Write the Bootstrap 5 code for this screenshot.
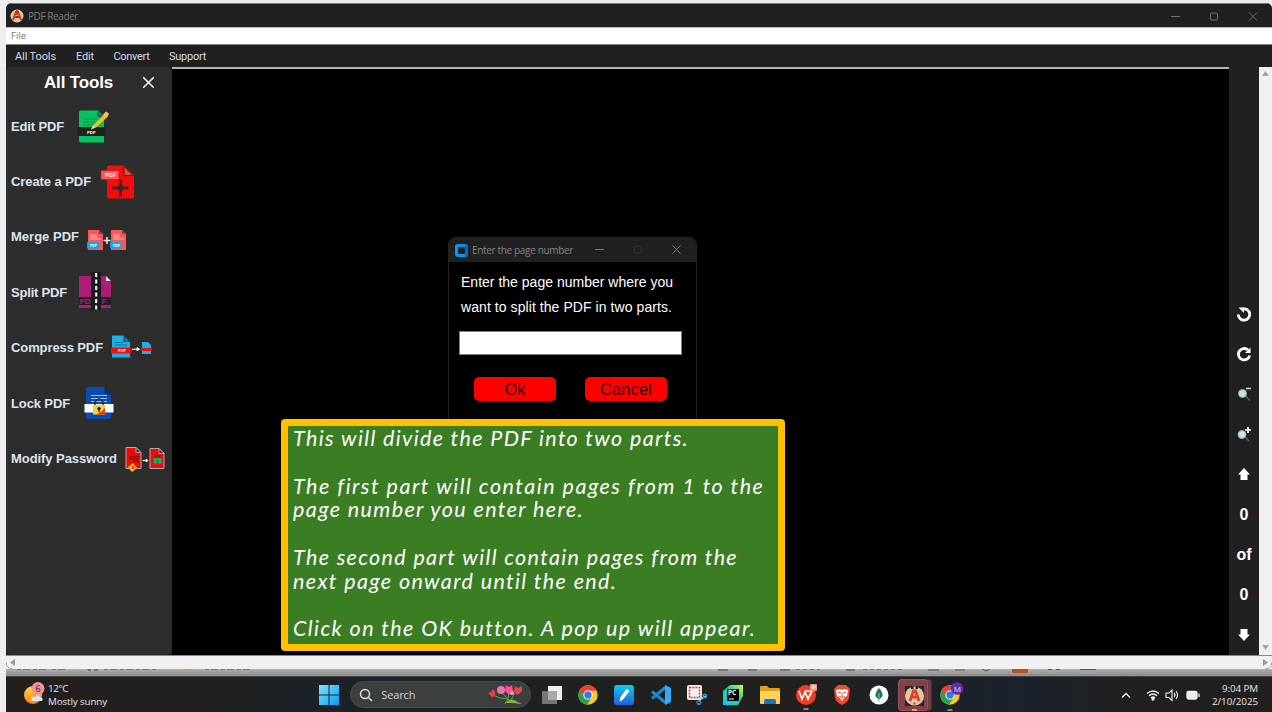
<!DOCTYPE html>
<html lang="en">
<head>
<meta charset="utf-8">
<title>PDF Reader</title>
<link href="https://cdn.jsdelivr.net/npm/bootstrap@5.3.0/dist/css/bootstrap.min.css" rel="stylesheet">
<style>
html,body{height:712px;overflow:hidden}
body{background:#eee;font-family:"Liberation Sans",Arial,sans-serif;line-height:1}
svg{display:block;flex:none}
.desk{width:1272px;height:712px;padding:3px 0 0 6px}
.win{height:666px;border-radius:6px 6px 7px 7px;background:#202020}
.ui{font-family:"Open Sans","Noto Sans",sans-serif}
.titlebar{height:24px;background:#202020;border-top:1px solid #777;color:#7c7c7c;font-size:10px}
.apptitle{margin-left:4px}
.filemenu{height:18px;background:#fff;border-top:1px solid #bbb;border-bottom:1px solid #888;color:#777;font-size:9.5px;padding-left:5px}
.toolmenu{height:22px;background:#202020;color:#d3dbe2;font:11px Roboto,sans-serif;padding-left:9px}
.m1{width:61px}.m2{width:37.5px}.m3{width:55.5px}
.workarea{height:588px}
.sidebar{width:166px;background:#2d2d2d;border-radius:5px}
.sidehead{height:31.5px;color:#fff;font-size:17px;padding-left:38px}
.headword{width:98px}
.tool{height:55.4px;padding-left:5px;color:#dce4ee;font-size:13px;font-weight:700}
.t1{width:57px}.t2{width:84px}.t3{width:74px}.t4{width:61px}.t5{width:97px}.t6{width:64px}.t7{width:109px}
.paper{background:#000;border-top:2px solid #b5b5b5}
.rail{width:30px;background:#202020;color:#fff;font-weight:700;font-size:16px}
.cell{height:40.15px}
.vscroll{width:13px;background:#f0f0f0}
.hscroll{height:14px;background:#f0f0f0;border-top:1px solid #888;border-radius:0 0 7px 7px}
.under{height:7px;background:linear-gradient(#b0b0b0,#8c8c8c)}
.taskbar{height:36px;background:linear-gradient(90deg,#22201f 0,#22201f 15%,#1a2228 25%,#202020 48%,#22201f 62%,#1b222c 80%,#22201f 90%);border-top:1px solid #444;color:#e6e6e6;font-size:9.8px;line-height:13px}
.weather{width:263px}
.pill{width:181px;height:27px;border-radius:14px;background:#3c3f40;border:1px solid #4a4c4d;color:#d0d0d0;font-size:11px;margin:0 2px 0 3px}
.app{width:36.35px}
.clock{width:48px;margin:0 14px 0 8px}
.dialog{left:448px;top:237px;width:249px;height:190px;border:1px solid #222;border-radius:7px 7px 0 0;background:#000;color:#fff}
.dialogbar{height:24px;background:#202020;border-radius:6px 6px 0 0;font-size:10px;color:#858585;padding-left:6px}
.dialogicon{margin-right:4px}
.prompt{font-size:14px;line-height:24.5px;padding:8px 0 0 12px}
.entry{width:223px;height:24px;background:#fff;border:1px solid #7a8084;margin:12px 0 0 10px}
.answers{padding:22px 0 0 25px;gap:29px}
.red{width:82px;height:24px;border-radius:5px;background:#f00;color:#300;font-size:16.5px}
.note{left:281px;top:419px;width:504px;height:232px;background:#3b7d23;border:7px solid #ffc000;border-radius:4px;color:#fff;font:italic 21.5px/23.75px Lato,sans-serif;padding:1px 0 0 5px}
[data-w]{white-space:nowrap}
.note span{display:table}
</style>
<script src="https://cdn.jsdelivr.net/npm/bootstrap@5.3.0/dist/js/bootstrap.bundle.min.js"></script>
</head>
<body>
<div class="desk d-flex flex-column position-relative">
 <main class="win d-flex flex-column overflow-hidden flex-shrink-0">
  <header class="titlebar ui d-flex align-items-center flex-shrink-0">
   <svg class="ms-1" width="14" height="14" viewBox="1 1 14 14"><circle cx="8" cy="8" r="6.500" fill="#dfc79d"/><path d="M4 12 7 4h2l3 8M5.500 9h5M6 6h4" fill="none" stroke="#d33a22" stroke-width="2"/><path d="M7 3h2M7 9h2" stroke="#222"/></svg>
   <span class="apptitle me-auto"><span data-w="50">PDF Reader</span></span>
   <svg width="104" height="22" viewBox="1168 4 104 22" fill="none" stroke="#707070"><path d="M1171 15.500h9M1249 11.500l8 8M1257 11.500l-8 8"/><rect x="1210.500" y="12" width="7" height="7" rx="1"/></svg>
  </header>
  <div class="filemenu ui d-flex align-items-center flex-shrink-0"><span data-w="15">File</span></div>
  <nav class="toolmenu d-flex align-items-center flex-shrink-0">
   <span class="m1"><span data-w="41">All Tools</span></span><span class="m2"><span data-w="18">Edit</span></span><span class="m3"><span data-w="36">Convert</span></span><span data-w="37">Support</span>
  </nav>
  <section class="workarea d-flex flex-shrink-0">
   <aside class="sidebar">
    <div class="sidehead d-flex align-items-center fw-bold"><span class="headword"><span data-w="69">All Tools</span></span><svg width="13" height="13" viewBox="0 0 13 13"><path d="M1.200 1.200l10.600 10.600M11.800 1.200 1.200 11.800" stroke="#fff" stroke-width="1.500"/></svg></div>
    <div class="tool d-flex align-items-center"><span class="t1"><span data-w="53">Edit PDF</span></span>
     <svg width="50" height="55" viewBox="68 98.500 50 55"><path d="M81 110h17l6 6v26H81q-2 0-2-2v-28q0-2 2-2z" fill="#04c35f"/><path d="M97 110v5q0 2 2 2h5z" fill="#087a40"/><path d="M83 118.500h14M83 121.500h12M83 124.500h10" stroke="#059348"/><rect x="77" y="126.500" width="28" height="9" fill="#202020"/><text x="87" y="133" font-size="4.300" fill="#fff">PDF</text><path d="M91 129l2-4 12-12 3 3-12 11z" fill="#eebd35"/><path d="M103 114l3-3q3 1 3 3l-3 3z" fill="#f1bd5b"/><path d="M91 129l2-4 2 2z" fill="#f7d8a2"/></svg></div>
    <div class="tool d-flex align-items-center"><span class="t2"><span data-w="80">Create a PDF</span></span>
     <svg width="50" height="55" viewBox="95 153.500 50 55"><path d="M109 165h15l10 10v21q0 2-2 2h-23q-2 0-2-2v-29q0-2 2-2z" fill="#f80b0b"/><path d="M124 166v9h9z" fill="#e15433" stroke="#40221f"/><rect x="101" y="170" width="18" height="9" fill="#ff5757" stroke="#9e2222" stroke-width=".6"/><text x="105" y="176.500" font-size="5.500" fill="#fff">PDF</text><path d="M120.500 179v17M112.500 187.500h16" stroke="#28282b" stroke-width="2.800"/><path d="M115.500 187.500l5-5 5 5-5 5z" fill="none" stroke="#8f2020"/></svg></div>
    <div class="tool d-flex align-items-center"><span class="t3"><span data-w="68">Merge PDF</span></span>
     <svg width="50" height="55" viewBox="85 209 50 55"><defs><g id="mergepage"><path d="M88 230h11l4 4v16H88z" fill="#ff5454"/><path d="M99 230v4h4z" fill="#55555b"/><path d="M90 234h7v4h4v2H90z" fill="#ff8882"/><rect x="87" y="242" width="12" height="6.500" rx="1" fill="#17a9df"/><text x="90" y="247" font-size="3.500" fill="#fff">PDF</text></g></defs><use href="#mergepage"/><use href="#mergepage" x="23"/><path d="M107 237v7M103.500 240.500h7" stroke="#eee" stroke-width="1.500"/></svg></div>
    <div class="tool d-flex align-items-center"><span class="t4"><span data-w="56">Split PDF</span></span>
     <svg width="50" height="55" viewBox="72 265 50 55"><path d="M79 276h26l6 6v26H79z" fill="#ab1d78"/><path d="M106 276v5h5z" fill="#d7e3ea"/><path d="M79 297h32v8H79z" fill="#222"/><text x="79.500" y="304" font-size="8" fill="#ab1d78">PD</text><text x="101.500" y="304" font-size="8" fill="#ab1d78">F</text><path d="M91 272h10v38H91z" fill="#1b1b1b"/><path d="M96.200 273v37" stroke="#fff" stroke-width="2" stroke-dasharray="4 2.500"/></svg></div>
    <div class="tool d-flex align-items-center"><span class="t5"><span data-w="92">Compress PDF</span></span>
     <svg width="50" height="55" viewBox="108 320.500 50 55"><path d="M112 336h12l6 6v16h-18z" fill="#1faee4"/><path d="M124 336v6h6z" fill="#1377a8" stroke="#222" stroke-width=".7"/><path d="M115 343h8M115 345.500h12" stroke="#0b79a2"/><rect x="111" y="348" width="20" height="6" fill="#f20a15"/><text x="118" y="352.800" font-size="4" fill="#fff">PDF</text><path d="M132 349.700h7M137 348.200l2.500 1.500-2.500 1.500z" stroke="#fff" fill="#fff"/><path d="M142 342.500h6l3 3v9h-9z" fill="#1faee4"/><path d="M141 348.500h11v3h-11z" fill="#f20a15"/></svg></div>
    <div class="tool d-flex align-items-center"><span class="t6"><span data-w="59">Lock PDF</span></span>
     <svg width="50" height="55" viewBox="75 376 50 55"><path d="M88 387h17l6 7v23q0 2-2 2H88q-2 0-2-2v-28q0-2 2-2z" fill="#0a4caf"/><path d="M105 387v5q0 2 2 2h4z" fill="#09357c" stroke="#222" stroke-width=".7"/><path d="M91 395.500h16M91 398.500h16M91 401.500h16" stroke="#a4bce8"/><path d="M84.500 404h29v8.500h-29z" fill="#fff"/><path d="M95 406v-4q4-6 8 0v4" fill="none" stroke="#2c3135" stroke-width="1.500"/><rect x="93" y="405" width="12" height="9.500" fill="#f9ce2d"/><path d="M97 414.500h8V407z" fill="#f33a20"/><path d="M95 412h6l4-4v-2H93v6z" fill="#f9ce2d"/><circle cx="99" cy="408.500" r="1.500"/><path d="M99 409v3" stroke="#000"/></svg></div>
    <div class="tool d-flex align-items-center"><span class="t7"><span data-w="106">Modify Password</span></span>
     <svg width="50" height="55" viewBox="120 431 50 55"><path d="M126 447.500h10l5 5v16h-15z" fill="#f00b0b" stroke="#aaa"/><path d="M136 447.500v5h5z" fill="#333" stroke="#ccc" stroke-width=".7"/><text x="129" y="460" font-size="5" fill="#641111">PDF</text><path d="M133 463l3-4 3 4" fill="none" stroke="#401b18"/><path d="M128 467l5-4 4 5-5 4z" fill="#ffc52c"/><path d="M131.500 466h3v3h-3z" fill="#ed4c1c"/><path d="M142.500 460.500h5M146 459.200l2 1.300-2 1.300z" stroke="#fff" fill="#fff"/><path d="M150 448.500h9l5 5v15h-14z" fill="#f00b0b" stroke="#aaa"/><path d="M159 448.500v5h5z" fill="#333" stroke="#ccc" stroke-width=".7"/><rect x="153.500" y="458" width="8" height="5.500" fill="#14ae61"/><path d="M155 458q2.500-5 5 0M157.500 460v3" fill="none" stroke="#293529"/></svg></div>
   </aside>
   <div class="paper flex-grow-1"></div>
   <div class="rail d-flex flex-column justify-content-end">
    <div class="cell d-flex align-items-center justify-content-center"><svg width="16" height="16" viewBox="0 0 16 16"><path d="M6.500 3A5.700 5.700 0 1 1 2.300 8.500" fill="none" stroke="#fff" stroke-width="2.800"/><path d="M2.500 1.500H8V7z" fill="#fff"/></svg></div>
    <div class="cell d-flex align-items-center justify-content-center"><svg width="16" height="16" viewBox="0 0 16 16"><path d="M12 4A5.700 5.700 0 1 0 13.700 9.500" fill="none" stroke="#fff" stroke-width="2.800"/><path d="M14.500 1.500V7H9z" fill="#fff"/></svg></div>
    <div class="cell d-flex align-items-center justify-content-center"><svg width="16" height="16" viewBox="0 0 16 16"><path d="m9 9.500 5 5" stroke="#76523c" stroke-width="1.600"/><circle cx="6.500" cy="7.500" r="4" fill="#c5e5e5" stroke="#91aaa9"/><path d="M10 2.500h5" stroke="#ccc" stroke-width="1.600"/></svg></div>
    <div class="cell d-flex align-items-center justify-content-center"><svg width="16" height="16" viewBox="0 0 16 16"><path d="m8 10 5 5" stroke="#76523c" stroke-width="1.600"/><circle cx="6" cy="8.500" r="4" fill="#c5e5e5" stroke="#91aaa9"/><path d="M9 4h6M12 1v6" stroke="#fff" stroke-width="1.700"/></svg></div>
    <div class="cell d-flex align-items-center justify-content-center"><svg width="14" height="14" viewBox="0 0 14 14"><path d="m7 1 6 6.500h-2.500V13h-7V7.500H1z" fill="#fff"/></svg></div>
    <div class="cell d-flex align-items-center justify-content-center">0</div>
    <div class="cell d-flex align-items-center justify-content-center">of</div>
    <div class="cell d-flex align-items-center justify-content-center">0</div>
    <div class="cell d-flex align-items-center justify-content-center"><svg width="14" height="14" viewBox="0 0 14 14"><path d="m7 13 6-6.500h-2.500V1h-7v5.500H1z" fill="#fff"/></svg></div>
   </div>
   <div class="vscroll d-flex flex-column justify-content-between align-items-center py-1"><svg width="7" height="6"><path d="M3.500 0 7 5H0z" fill="#a5a5a5"/></svg><svg width="7" height="6"><path d="M3.500 5 7 0H0z" fill="#a5a5a5"/></svg></div>
  </section>
  <div class="hscroll d-flex align-items-center justify-content-between px-1 flex-shrink-0"><svg width="5" height="7"><path d="M0 3.500 5 0v7z" fill="#999"/></svg><svg width="5" height="7"><path d="M5 3.500 0 0v7z" fill="#999"/></svg></div>
 </main>
 <div class="under flex-shrink-0"><svg width="1266" height="7" viewBox="6 669 1266 7"><path d="M17 669.500h30M52 669.500h13M104 669.500h54M205 669.500h46" stroke="#777" stroke-dasharray="4 2 7 3"/><path d="M88 668v2h3M94 670h4M718 670h10M748 670h9M780 670h10M846 670h9" stroke="#444" fill="none"/><path d="M796 669.500h24M863 669.500h42" stroke="#777" stroke-dasharray="4 3"/><path d="M183 669h10l-2 2h-6z" fill="#c89b59"/><path d="M928 670h11M955 670h10M982 669l4 2 4-2M1048 669.500h4M1056 669.500h4M1080 669.500h16" stroke="#555" fill="none"/><path d="M1012 668h16v4q0 1-2 1h-12q-2 0-2-1z" fill="#b8501c"/></svg></div>
 <footer class="taskbar ui d-flex align-items-center flex-shrink-0">
  <svg class="ms-3" width="26" height="34" viewBox="22 677 26 34"><defs><linearGradient id="sun" x2="0" y2="1"><stop stop-color="#ffd24c"/><stop offset="1" stop-color="#ff830f"/></linearGradient></defs><circle cx="33" cy="694" r="9" fill="url(#sun)"/><path d="M31 699q0-4 4-3 3-4 5 0 4 1 2 4H33q-2 0-2-1z" fill="#d5e6ff"/><circle cx="38" cy="687.500" r="6.500" fill="#f39297"/><text x="35.400" y="691" font-size="9" fill="#222">6</text></svg>
  <div class="weather"><div><span data-w="20">12°C</span></div><div><span data-w="59">Mostly sunny</span></div></div>
  <div class="app d-flex justify-content-center"><svg width="20" height="20"><defs><linearGradient id="blue" x2="1" y2="1"><stop stop-color="#7ce5ff"/><stop offset="1" stop-color="#0a9bf2"/></linearGradient></defs><path d="M0 0h9.500v9.500H0zM10.500 0H20v9.500h-9.500zM0 10.500h9.500V20H0zM10.500 10.500H20V20h-9.500z" fill="url(#blue)"/></svg></div>
  <div class="pill d-flex align-items-center ps-2">
   <svg width="14" height="14" viewBox="0 0 14 14"><circle cx="6" cy="6" r="4.500" fill="none" stroke="#ddd" stroke-width="1.500"/><path d="m9.500 9.500 3.500 3.500" stroke="#ddd" stroke-width="1.500"/></svg><span class="apptitle ps-1 me-auto"><span data-w="34">Search</span></span>
   <svg class="me-1" width="38" height="22" viewBox="0 0 38 22"><path d="M5 11q6 4 15 4M13 8q4 4 8 8M21 8q0 7-4 12M30 6q-5 5-8 12" stroke="#4eaa42" fill="none"/><path d="M17 19q5-5 9-3l8 4-9-1z" fill="#79b83c"/><path d="m0 9 3-1 2-3q3 2 2 7l-3 1z" fill="#ed3e45"/><circle cx="13" cy="6" r="4" fill="#ed75ac"/><path d="M18 1l3 2 3-2 1 6-4 4-4-4z" fill="#ff4c93"/><path d="M27 2l3 2 4-2v5l-4 4-4-3z" fill="#e64549"/><circle cx="24" cy="9" r="2" fill="#f6a5c5"/></svg></div>
  <div class="app d-flex justify-content-center"><svg width="20" height="20"><path d="M6 1h14v14H6z" fill="#eee"/><path d="M0 6h15v13H0z" fill="#929292" opacity=".75"/></svg></div>
  <div class="app d-flex justify-content-center"><svg width="20" height="20" viewBox="0 0 20 20"><g id="browser"><circle cx="10" cy="10" r="9.700" fill="#fbc917"/><path d="M1.600 5A9.700 9.700 0 0 0 9 19.700L14 12 10 10z" fill="#2ba24c"/><path d="M10 5.700H18.700A9.700 9.700 0 0 0 1.600 5L6 12z" fill="#ec4035"/><circle cx="10" cy="10" r="4.700" fill="#fff"/><circle cx="10" cy="10" r="3.700" fill="#307be8"/></g></svg></div>
  <div class="app d-flex justify-content-center"><svg width="20" height="20"><defs><linearGradient id="ink" x2="0" y2="1"><stop stop-color="#05ceea"/><stop offset="1" stop-color="#285ee6"/></linearGradient></defs><rect width="20" height="20" rx="3" fill="url(#ink)"/><path d="m6 16 1-4 6-8 2 2-6 8z" fill="#fff" stroke="#fff"/></svg></div>
  <div class="app d-flex justify-content-center"><svg width="20" height="20"><path d="M1 6.500 15 18M1 13.500 15 2" stroke="#168bd1" stroke-width="3"/><path d="m14 0 6 3v14l-6 3z" fill="#39a9ed"/></svg></div>
  <div class="app d-flex justify-content-center"><svg width="20" height="20"><rect width="15" height="15" rx="2" fill="#eee"/><rect x="2.500" y="2.500" width="10" height="10" fill="none" stroke="#d94932" stroke-width="1.500" stroke-dasharray="2 1"/><path d="m12 15 7-4M14 10l-1 7" stroke="#b8cddb" stroke-width="1.500"/><circle cx="12" cy="17.500" r="1.800" fill="none" stroke="#2492d1" stroke-width="1.500"/><circle cx="18" cy="11" r="1.800" fill="none" stroke="#2492d1" stroke-width="1.500"/></svg></div>
  <div class="app d-flex justify-content-center"><svg width="20" height="20"><defs><linearGradient id="charm" x1="1" x2="0" y2="1"><stop stop-color="#f1ee41"/><stop offset=".4" stop-color="#2bd78c"/><stop offset="1" stop-color="#08c8fc"/></linearGradient></defs><path d="M7 0h13v11l-5 9H0V6z" fill="url(#charm)"/><path d="M4 4h12v12H4z"/><text x="5" y="10" font-size="6.500" font-weight="bold" fill="#fff">PC</text><path d="M6 14h5" stroke="#fff"/></svg></div>
  <div class="app d-flex justify-content-center"><svg width="20" height="20"><path d="M0 2q0-1 1-1h6l2 2h10q1 0 1 1v14H0z" fill="#e2a218"/><path d="M0 6h20v12q0 1-1 1H1q-1 0-1-1z" fill="#ffd35b"/><path d="M4 16q0-2 2-2h8q2 0 2 2v3H4z" fill="#1277c5"/></svg></div>
  <div class="app d-flex justify-content-center"><svg width="22" height="30" viewBox="-1 -5 22 30"><circle cx="10" cy="10" r="10" fill="#ee3d21"/><path d="m3 6 3 8 3-7 3 7 4-8H9" stroke="#fff" stroke-width="1.700" fill="none"/><rect x="14" y="-1" width="7" height="7" rx="1" fill="#ea9976"/><path d="M16 4V1h3v2h-3" fill="none" stroke="#fff" stroke-width=".8"/><path d="M7.500 24h5" stroke="#aaa" stroke-width="1.500"/></svg></div>
  <div class="app d-flex justify-content-center"><svg width="18" height="20"><path d="m5 0h8l4 4-1 9q-1 4-7 7-6-3-7-7L1 4z" fill="#f04a2c"/><path d="m3 5 4-1 2 1 2-1 4 1-1 6-3 2-2 3-2-3-3-2z" fill="#fff"/><path d="m5 7 3 1M13 7l-3 1M9 8v4M6 11l3 2 3-2" stroke="#ef472c" fill="none"/></svg></div>
  <div class="app d-flex justify-content-center"><svg width="20" height="20"><circle cx="10" cy="10" r="9.500" fill="#fff"/><path d="M10 3q7 7 0 12-7-5 0-12z" fill="#187b4e"/><path d="M10 8v9" stroke="#a7b8a5"/></svg></div>
  <div class="app d-flex justify-content-center"><svg width="34" height="32"><rect x=".5" y=".5" width="33" height="31" rx="3" fill="#733a42"/><rect x=".5" y=".5" width="29" height="31" rx="3" fill="#854149" stroke="#93545a"/><path d="M7 7h19v20H7z" fill="#27262c"/><circle cx="16.500" cy="17" r="9.500" fill="#ddc9a2"/><path d="m12 22 3.500-10h2L21 22M14 18h5" fill="none" stroke="#e33e2b" stroke-width="2.800"/><path d="M13 9h2.500M17.500 9H20" stroke="#222" stroke-width="1.800"/><path d="M15.500 24.500h2" stroke="#e33e2b" stroke-width="2"/><path d="M14 31h5" stroke="#ff8891" stroke-width="2"/></svg></div>
  <div class="app d-flex justify-content-center"><svg width="26" height="32" viewBox="-2 -6 26 32"><use href="#browser"/><circle cx="17" cy="3.500" r="6.300" fill="#5b2fb1"/><text x="13.800" y="6.500" font-size="8" fill="#e8d8ff">M</text><path d="M7.500 25h5" stroke="#aaa" stroke-width="1.500"/></svg></div>
  <svg class="ms-auto" width="84" height="20" viewBox="1117 685 84 20" fill="none" stroke="#eee" stroke-width="1.300"><path d="m1121 697.500 4-4 4 4"/><path d="M1146 693.500q6-5 12 0M1148 695.800q4-3.500 8 0M1150 698q2-2 4 0"/><circle cx="1152" cy="699" r="1" fill="#eee"/><path d="M1165 693h3l3-3v10.500l-3-3h-3zM1173 693q2 2 0 4M1175 691q3 4 0 8" stroke-width="1.100"/><rect x="1186" y="691.500" width="10" height="7.500" rx="1.500" fill="#eee"/><path d="M1198 693.500v3.500"/></svg>
  <div class="clock text-end"><div><span data-w="36">9:04 PM</span></div><div><span data-w="46">2/10/2025</span></div></div>
 </footer>

 <section class="dialog position-absolute">
  <header class="dialogbar ui d-flex align-items-center">
   <svg class="dialogicon" width="13" height="13" viewBox="0 0 13 13"><rect width="13" height="13" rx="3" fill="#0994f4"/><path d="M10 0q3 0 3 3v7q0 3-3 3z" fill="#076bb6"/><rect x="3" y="3" width="7" height="7" rx="1" fill="#15232c"/></svg>
   <span class="me-auto"><span data-w="101">Enter the page number</span></span>
   <svg width="104" height="24" viewBox="592 238 104 24" fill="none" stroke="#777"><path d="M595 249.500h9M672.500 245.500l8 8M680.500 245.500l-8 8"/><rect x="634" y="246" width="7" height="7" rx="1" stroke="#333"/></svg>
  </header>
  <div class="prompt"><div><span data-w="212">Enter the page number where you</span></div><div><span data-w="211">want to split the PDF in two parts.</span></div></div>
  <div class="entry"></div>
  <div class="answers d-flex"><div class="red d-flex align-items-center justify-content-center"><span data-w="21">Ok</span></div><div class="red d-flex align-items-center justify-content-center"><span data-w="52">Cancel</span></div></div>
 </section>
 <section class="note position-absolute">
  <span data-w="396">This will divide the PDF into two parts.</span><br>
  <span data-w="471">The first part will contain pages from 1 to the</span>
  <span data-w="291">page number you enter here.</span><br>
  <span data-w="445">The second part will contain pages from the</span>
  <span data-w="324">next page onward until the end.</span><br>
  <span data-w="462">Click on the OK button. A pop up will appear.</span>
 </section>
</div>
<script>
// Track each label so that it fills its intended line width.
document.querySelectorAll('[data-w]').forEach(function (el) {
  var w = el.getBoundingClientRect().width;
  el.style.letterSpacing = ((el.dataset.w - w) / el.textContent.length) + 'px';
});
</script>
</body>
</html>
